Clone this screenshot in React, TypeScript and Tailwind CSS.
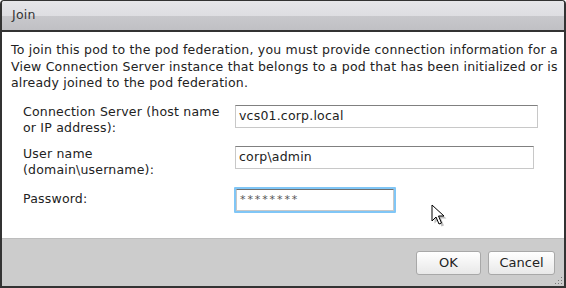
import React from 'react';

const font = { fontFamily: '"DejaVu Sans", Verdana, sans-serif' };

const Cursor: React.FC = () => (
  <svg className="absolute left-[431px] top-[204px]" width="16" height="24" viewBox="0 0 16 24">
    <path d="M2 2 L2 18 L6 14 L9 21 L11.5 20 L8.5 13 L14 13 Z" fill="#000" opacity="0.25" transform="translate(1.5 1.5)" />
    <path d="M1 1 L1 17 L5 13 L8 20 L10.5 19 L7.5 12 L13 12 Z" fill="#fff" stroke="#000" strokeWidth="1" strokeLinejoin="miter" />
  </svg>
);

export default function App() {
  return (
    <div className="relative w-[566px] h-[288px] bg-white text-[12.5px] tracking-[0.2px] text-[#222]" style={font}>
      <div className="flex flex-col h-full border-x-2 border-b-2 border-t border-[#333] rounded-t-[4px] overflow-hidden">
        <div className="h-[31px] flex items-center px-[10px] border-b-2 border-[#333] bg-[linear-gradient(#e6e6e9_0%,#dedee2_50%,#c8c8cc_52%,#c0c0c4_100%)] text-[#333] text-[12.5px]">
          Join
        </div>

        <div className="flex-1 px-[9px] pt-[10px]">
          <p className="leading-[16.5px] whitespace-nowrap">
            To join this pod to the pod federation, you must provide connection information for a
            <br />
            View Connection Server instance that belongs to a pod that has been initialized or is
            <br />
            already joined to the pod federation.
          </p>

          <div className="mt-[12px] pl-[12px] flex flex-col">
            <div className="flex items-start">
              <label className="w-[212px] leading-[16px] whitespace-nowrap">
                Connection Server (host name
                <br />
                or IP address):
              </label>
              <div className="w-[303px] h-[23px] mt-[1px] border border-[#c8c8c8] border-t-[#808080] flex items-center px-[3px]">
                vcs01.corp.local
              </div>
            </div>
            <div className="flex items-start mt-[10px]">
              <label className="w-[212px] leading-[16px] whitespace-nowrap">
                User name
                <br />
                (domain\username):
              </label>
              <div className="w-[299px] h-[23px] border border-[#c8c8c8] border-t-[#808080] flex items-center px-[3px]">
                corp\admin
              </div>
            </div>
            <div className="flex items-center mt-[9px]">
              <label className="w-[211px] leading-[16px] -mt-[1px]">Password:</label>
              <div className="w-[162px] h-[26px] border-2 border-[#80c6f6] rounded-[1px]">
                <div className="h-full border border-[#c8c8c8] border-t-[#707070] flex items-start pt-[2px] px-[3px] text-[11px] tracking-[1.9px] text-[#555]">
                  ********
                </div>
              </div>
            </div>
          </div>
        </div>

        <div className="h-[48px] bg-[#cccccc] border-t border-[#bdbdbd] flex justify-end items-start pt-[12px] pr-[9px] gap-[7px] relative">
          <button className="w-[65px] h-[24px] rounded-[3px] border border-[#a8a8a8] bg-[linear-gradient(#ffffff,#e8e8e8)] text-[13px] tracking-normal text-[#222]">
            OK
          </button>
          <button className="w-[67px] h-[24px] rounded-[3px] border border-[#a8a8a8] bg-[linear-gradient(#ffffff,#e8e8e8)] text-[13px] tracking-normal text-[#222]">
            Cancel
          </button>
          <svg className="absolute right-[1px] bottom-[1px]" width="9" height="9" viewBox="0 0 9 9">
            <rect x="7" y="1" width="1" height="1" fill="#777" />
            <rect x="4" y="4" width="1" height="1" fill="#777" />
            <rect x="7" y="4" width="1" height="1" fill="#777" />
            <rect x="1" y="7" width="1" height="1" fill="#777" />
            <rect x="4" y="7" width="1" height="1" fill="#777" />
            <rect x="7" y="7" width="1" height="1" fill="#777" />
          </svg>
        </div>
      </div>
      <Cursor />
    </div>
  );
}
